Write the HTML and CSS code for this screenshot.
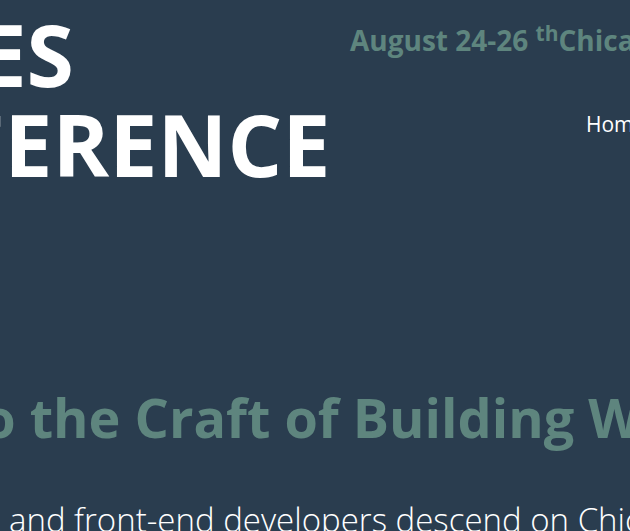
FILE: index.html
```html
<!DOCTYPE html>
<html lang="en">
<head>
<meta charset="utf-8">
<title>Conference</title>
<link rel="stylesheet" href="styles.css">
</head>
<body>
<div class="page">
  <header class="masthead">
    <h1 class="brand">STYLES<br>CONFERENCE</h1>
    <div class="meta">
      <p class="dates">August 24-26 <sup>th</sup>Chicago, IL</p>
      <nav class="nav">
        <a href="#">Home</a>
        <a href="#">Speakers</a>
        <a href="#">Schedule</a>
      </nav>
    </div>
  </header>
  <section class="hero">
    <h2 class="hero-title">Welcome to the Craft of Building Websites</h2>
    <p class="hero-text">Web designers and front-end developers descend on Chicago for three days of learning.</p>
  </section>
</div>
</body>
</html>
```
FILE: styles.css
```css
html, body {
  margin: 0;
  padding: 0;
}
body {
  background: #2a3d4f;
  overflow: hidden;
  font-family: "Open Sans", "Noto Sans", sans-serif;
  color: #ffffff;
}
.page {
  margin-left: -270px;
  width: 1400px;
}
.masthead {
  display: flex;
  align-items: flex-start;
  padding-top: 9px;
}
.brand {
  flex: 0 0 586px;
  width: 586px;
  min-width: 0;
  margin: 0 0 0 34px;
  font-size: 86px;
  line-height: 90px;
  font-weight: 700;
  text-indent: 15px;
  color: #ffffff;
  white-space: nowrap;
}
.meta {
  display: flex;
  flex-direction: column;
}
.dates {
  margin: 14px 0 0;
  font-size: 28px;
  line-height: 34px;
  font-weight: 700;
  color: #5e857e;
  white-space: nowrap;
}
.dates sup {
  font-size: 0.75em;
  line-height: 0;
}
.nav {
  display: flex;
  gap: 24px;
  margin: 53px 0 0 236px;
  white-space: nowrap;
}
.nav a {
  color: #ffffff;
  text-decoration: none;
  font-size: 21px;
  line-height: 28px;
}
.hero {
  display: flex;
  flex-direction: column;
}
.hero-title {
  margin: 197px 0 0 -32px;
  font-size: 54px;
  line-height: 62px;
  font-weight: 700;
  color: #5e857e;
  white-space: nowrap;
}
.hero-text {
  margin: 50px 0 0 51px;
  font-size: 33px;
  line-height: 44px;
  font-weight: 300;
  white-space: nowrap;
}
```
